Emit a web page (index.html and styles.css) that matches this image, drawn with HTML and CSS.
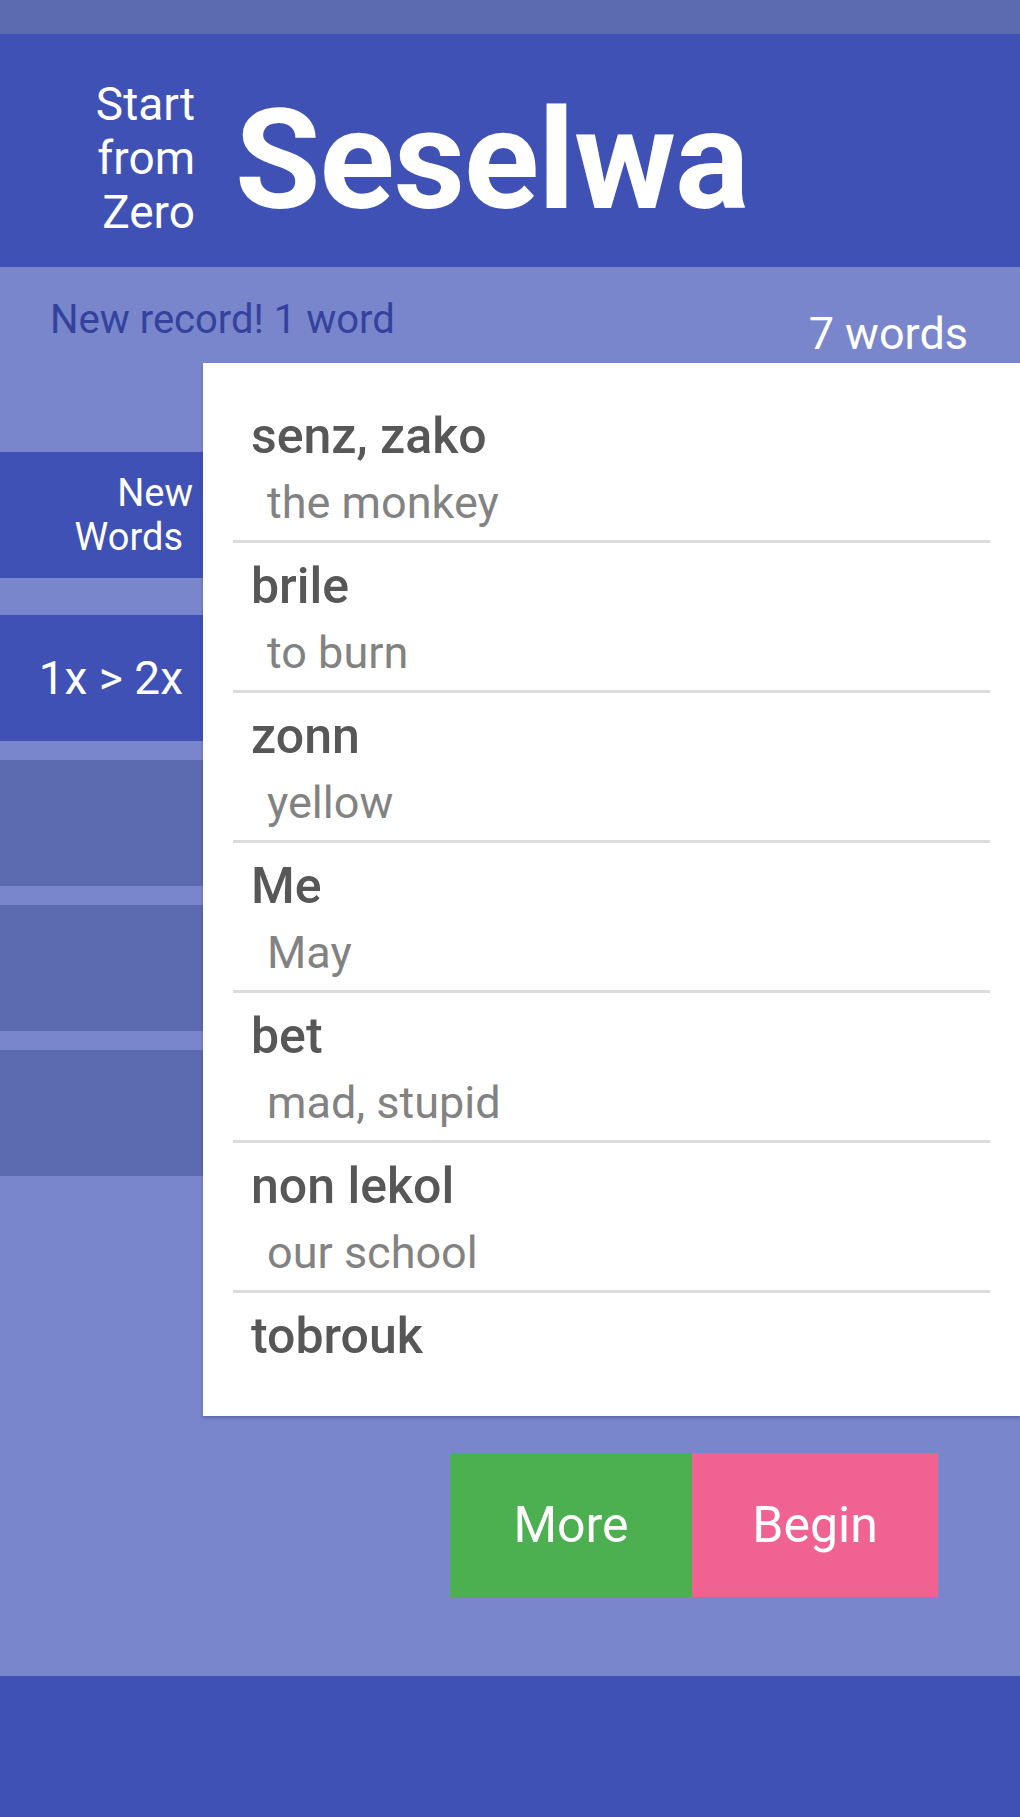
FILE: index.html
```html
<!DOCTYPE html>
<html lang="en">
<head>
<meta charset="utf-8">
<title>Seselwa - Start from Zero</title>
<link rel="stylesheet" href="styles.css">
</head>
<body>
<div class="page">
  <div class="statusbar"></div>
  <header class="header">
    <div class="tagline">Start<br>from<br>Zero</div>
    <h1 class="brand">Seselwa</h1>
  </header>
  <main class="main">
    <div class="stats">
      <span class="record">New record! 1 word</span>
      <span class="count">7 words</span>
    </div>
    <div class="content">
      <nav class="tabs">
        <div class="tab tab-active tab-first"><span class="tab-line tab-line-shift">New</span><span class="tab-line">Words</span></div>
        <div class="tab tab-active tab-big">1x &gt; 2x</div>
        <div class="tab"></div>
        <div class="tab"></div>
        <div class="tab"></div>
      </nav>
      <section class="card">
        <ul class="words">
          <li class="word"><div class="term">senz, zako</div><div class="meaning">the monkey</div></li>
          <li class="word"><div class="term">brile</div><div class="meaning">to burn</div></li>
          <li class="word"><div class="term">zonn</div><div class="meaning">yellow</div></li>
          <li class="word"><div class="term">Me</div><div class="meaning">May</div></li>
          <li class="word"><div class="term">bet</div><div class="meaning">mad, stupid</div></li>
          <li class="word"><div class="term">non lekol</div><div class="meaning">our school</div></li>
          <li class="word word-last"><div class="term">tobrouk</div></li>
        </ul>
      </section>
    </div>
    <div class="actions">
      <button class="btn btn-more">More</button>
      <button class="btn btn-begin">Begin</button>
    </div>
  </main>
  <footer class="footer"></footer>
</div>
</body>
</html>
```

FILE: styles.css
```css
* { box-sizing: border-box; }

html, body {
  margin: 0;
  padding: 0;
}

body {
  font-family: "Roboto", "Liberation Sans", sans-serif;
  background: #7986cb;
}

.page {
  width: 1020px;
  height: 1817px;
  display: flex;
  flex-direction: column;
  overflow: hidden;
}

.statusbar {
  height: 34px;
  background: #5c6bb0;
  flex: none;
}

.header {
  height: 233px;
  flex: none;
  background: #3f51b5;
  display: flex;
  align-items: flex-start;
  padding-top: 43px;
  color: #ffffff;
}

.tagline {
  margin-left: 60px;
  width: 135px;
  text-align: right;
  font-size: 46px;
  line-height: 54px;
  font-weight: 400;
}

.brand {
  margin: 15px 0 0 40px;
  font-size: 139px;
  line-height: 138px;
  font-weight: 700;
  letter-spacing: -1px;
}

.main {
  flex: 1;
  background: #7986cb;
  display: flex;
  flex-direction: column;
}

.stats {
  height: 96px;
  flex: none;
  display: flex;
  justify-content: space-between;
  align-items: flex-start;
  padding: 0 52px 0 50px;
}

.record {
  margin-top: 30px;
  font-size: 40px;
  line-height: 46px;
  color: #34429e;
}

.count {
  margin-top: 41px;
  font-size: 45px;
  line-height: 52px;
  color: #ffffff;
}

.content {
  display: flex;
  height: 1053px;
  flex: none;
}

.tabs {
  width: 203px;
  flex: none;
  padding-top: 89px;
  display: flex;
  flex-direction: column;
}

.tab {
  height: 126px;
  margin-bottom: 19px;
  background: #5c6bb0;
  color: #ffffff;
  display: flex;
  flex-direction: column;
  justify-content: center;
  align-items: flex-end;
  padding-right: 20px;
  font-size: 38px;
  line-height: 44px;
  text-align: right;
}

.tab-active {
  background: #3f51b5;
}

.tab-first {
  margin-bottom: 37px;
}

.tab-line {
  display: block;
}

.tab-line-shift {
  margin-right: -10px;
}

.tab-big {
  font-size: 46px;
  padding-right: 20px;
}

.card {
  flex: 1;
  background: #ffffff;
  padding: 30px 30px 0 30px;
  overflow: hidden;
  box-shadow: 0 2px 3px rgba(40, 50, 120, 0.35);
}

.words {
  list-style: none;
  margin: 0;
  padding: 0;
}

.word {
  padding-top: 13px;
  border-bottom: 3px solid #dcdcdc;
}

.word-last {
  border-bottom: none;
}

.term {
  padding-left: 18px;
  font-size: 50px;
  line-height: 60px;
  font-weight: 500;
  color: #575757;
}

.meaning {
  padding-left: 34px;
  font-size: 45px;
  line-height: 74px;
  color: #828282;
}

.actions {
  display: flex;
  justify-content: flex-end;
  padding-right: 82px;
  margin-top: 37px;
}

.btn {
  border: none;
  margin: 0;
  height: 144px;
  color: #ffffff;
  font-family: "Roboto", "Liberation Sans", sans-serif;
  font-size: 50px;
  font-weight: 400;
  padding: 0;
}

.btn-more {
  width: 242px;
  background: #4caf50;
}

.btn-begin {
  width: 246px;
  background: #f06292;
}

.footer {
  height: 141px;
  flex: none;
  background: #3f51b5;
}
```
